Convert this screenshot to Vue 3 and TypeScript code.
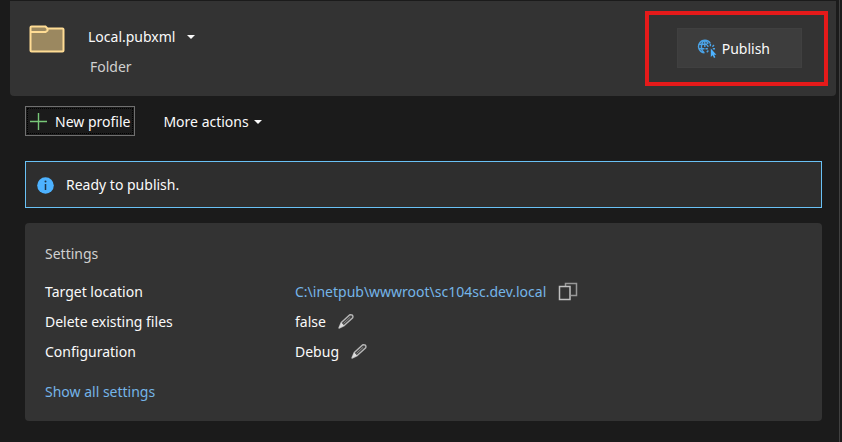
<script setup lang="ts">
interface Setting {
  label: string
  value: string
  action: 'copy' | 'edit'
}

const settings: Setting[] = [
  { label: 'Target location', value: 'C:\\inetpub\\wwwroot\\sc104sc.dev.local', action: 'copy' },
  { label: 'Delete existing files', value: 'false', action: 'edit' },
  { label: 'Configuration', value: 'Debug', action: 'edit' },
]
</script>

<template>
  <div class="window">
    <main class="page">
      <header class="profile">
        <svg class="folder" viewBox="0 0 36 28" aria-hidden="true">
          <path d="M1.5 25.5V2.5Q1.5 1.5 2.5 1.5H16.5L18.5 3.5H33.5Q34.5 3.5 34.5 4.5V25.5Q34.5 26.5 33.5 26.5H2.5Q1.5 26.5 1.5 25.5Z" fill="#9b8860" stroke="#ffdc94" stroke-width="2" />
          <path d="M2 7H16.5L18.5 5.5V3.5" fill="none" stroke="#ffdc94" stroke-width="2" />
        </svg>
        <div class="identity">
          <button class="plain name" type="button">
            Local.pubxml
            <svg class="caret" viewBox="0 0 8 4" aria-hidden="true"><path d="M0 0H8L4 4Z" /></svg>
          </button>
          <span class="kind">Folder</span>
        </div>
        <div class="highlight">
          <button class="publish" type="button">
            <svg class="globe" viewBox="0 0 20 20" aria-hidden="true">
              <g fill="none" stroke="#4ba3e6" stroke-width="1.4">
                <path d="M13.4 4.5A6.3 6.3 0 1 0 7.5 13.8" />
                <path d="M7 1.5C3.5 4.5 3.5 11 7 13.5M8.5 1.5C10 2.5 10.8 4 11 5M2 5.3H10M2 9.8H7.5M7.8 1.5V8" />
                <path d="M13.4 5V7.2M9.8 6L11.4 7.7M17 6L15.4 7.7M8.5 9.7H10.8M15.8 9.7H18M9.8 13.2L11.4 11.5" />
              </g>
              <path d="M13.8 9.5V18L15.7 16.2L17 19L18.4 18.3L17.1 15.7H19.4Z" fill="#4db2ff" />
            </svg>
            Publish
          </button>
        </div>
      </header>

      <nav class="toolbar">
        <button class="new-profile" type="button">
          <svg class="plus" viewBox="0 0 17 17" aria-hidden="true"><path d="M8.5 0V17M0 8.5H17" stroke="#78c878" stroke-width="1.4" /></svg>
          New profile
        </button>
        <button class="plain more" type="button">
          More actions
          <svg class="caret" viewBox="0 0 8 4" aria-hidden="true"><path d="M0 0H8L4 4Z" /></svg>
        </button>
      </nav>

      <section class="status" role="status">
        <svg class="info" viewBox="0 0 17 17" aria-hidden="true">
          <circle cx="8.5" cy="8.5" r="8.3" fill="#4db2ff" />
          <circle cx="8.5" cy="4.6" r="1" fill="#1d3347" />
          <path d="M8.5 7V13" stroke="#1d3347" stroke-width="1.5" />
        </svg>
        Ready to publish.
      </section>

      <section class="settings">
        <h2>Settings</h2>
        <dl>
          <template v-for="item in settings" :key="item.label">
            <dt>{{ item.label }}</dt>
            <dd>
              <a v-if="item.action === 'copy'" href="#">{{ item.value }}</a>
              <span v-else>{{ item.value }}</span>
              <button v-if="item.action === 'copy'" class="plain" type="button" :aria-label="`Copy ${item.label}`">
                <svg class="copy" viewBox="0 0 20 20" fill="none" stroke-width="1.5" aria-hidden="true">
                  <path d="M7.5 4V1.5H18.5V13.5H13" stroke="#989898" />
                  <rect x="1.5" y="4.5" width="10.5" height="13" stroke="#c0c0c0" />
                </svg>
              </button>
              <button v-else class="plain" type="button" :aria-label="`Edit ${item.label}`">
                <svg class="pencil" viewBox="0 0 16 16" aria-hidden="true">
                  <path d="M3.3 8.5L11.5 1Q12.8 .4 14.4 1.2Q15.4 2.6 14.5 4L6.2 11.6L1 14Z" fill="#424242" stroke="#b8b8b8" stroke-width="1.4" stroke-linejoin="round" />
                  <path d="M3.3 8.5L6.2 11.6L1 14Z" fill="#dedede" />
                  <path d="M5.6 9.4L12 3.4" stroke="#858585" />
                </svg>
              </button>
            </dd>
          </template>
        </dl>
        <a class="all" href="#">Show all settings</a>
      </section>
    </main>
  </div>
</template>

<style>
body {
  background: #1b1b1b;
}
</style>

<style scoped>
.window {
  box-sizing: border-box;
  min-height: 100vh;
  margin-right: 2px;
  padding: 1px 3px 0 10px;
  border-right: 1px solid #404040;
  background: #1b1b1b;
  color: #fafafa;
  font: 14px/30px "Noto Sans", "Open Sans", sans-serif;
}

button {
  margin: 0;
  color: inherit;
  font: inherit;
}

svg {
  display: block;
  flex: none;
}

a {
  color: #75b5e8;
  text-decoration: none;
}

.plain {
  display: flex;
  align-items: center;
  padding: 0;
  border: 0;
  background: none;
}

.caret {
  width: 8px;
  height: 4px;
  fill: #fafafa;
}

.profile {
  display: flex;
  align-items: flex-start;
  padding: 10px 8px 10px 19px;
  border-radius: 0 0 4px 4px;
  background: #333;
}

.folder {
  width: 36px;
  height: 28px;
  margin-top: 14px;
}

.identity {
  flex: 1;
  padding: 11px 0 0 23px;
}

.name {
  gap: 12px;
}

.kind {
  display: block;
  padding-left: 2px;
  color: #d0d0d0;
}

.highlight {
  padding: 13px 22px 14px 28px;
  border: 4px solid #e51a1a;
}

.publish {
  display: flex;
  align-items: center;
  gap: 5px;
  padding: 5px 31px 3px 19px;
  border: 1px solid #404040;
  background: #3d3d3d;
}

.globe {
  width: 20px;
  height: 20px;
}

.toolbar {
  display: flex;
  gap: 28px;
  padding: 10px 14px 25px 15px;
}

.new-profile {
  display: flex;
  align-items: center;
  gap: 8px;
  padding: 1px 4px 0;
  border: 1px solid #707070;
  outline: 1px dotted #000;
  outline-offset: -3px;
  background: transparent;
  line-height: 27px;
}

.plus {
  width: 17px;
  height: 17px;
}

.more {
  gap: 5px;
  padding-top: 1px;
  line-height: 29px;
}

.status {
  display: flex;
  align-items: center;
  gap: 12px;
  margin: 0 14px 0 15px;
  padding: 8px 11px 7px;
  border: 1px solid #69c1f5;
  background: #2e2e2e;
}

.info {
  width: 17px;
  height: 17px;
}

.settings {
  margin: 15px 14px 0 15px;
  padding: 16px 20px 14px;
  border-radius: 4px;
  background: #333;
}

h2 {
  margin: 0 0 8px;
  color: #d0d0d0;
  font: inherit;
}

dl {
  display: grid;
  grid-template-columns: 250px 1fr;
  margin: 0 0 10px;
}

dd {
  display: flex;
  align-items: center;
  gap: 12px;
  margin: 0;
}

.copy {
  width: 20px;
  height: 20px;
}

.pencil {
  width: 16px;
  height: 16px;
}

.all {
  display: block;
  width: fit-content;
}
</style>
